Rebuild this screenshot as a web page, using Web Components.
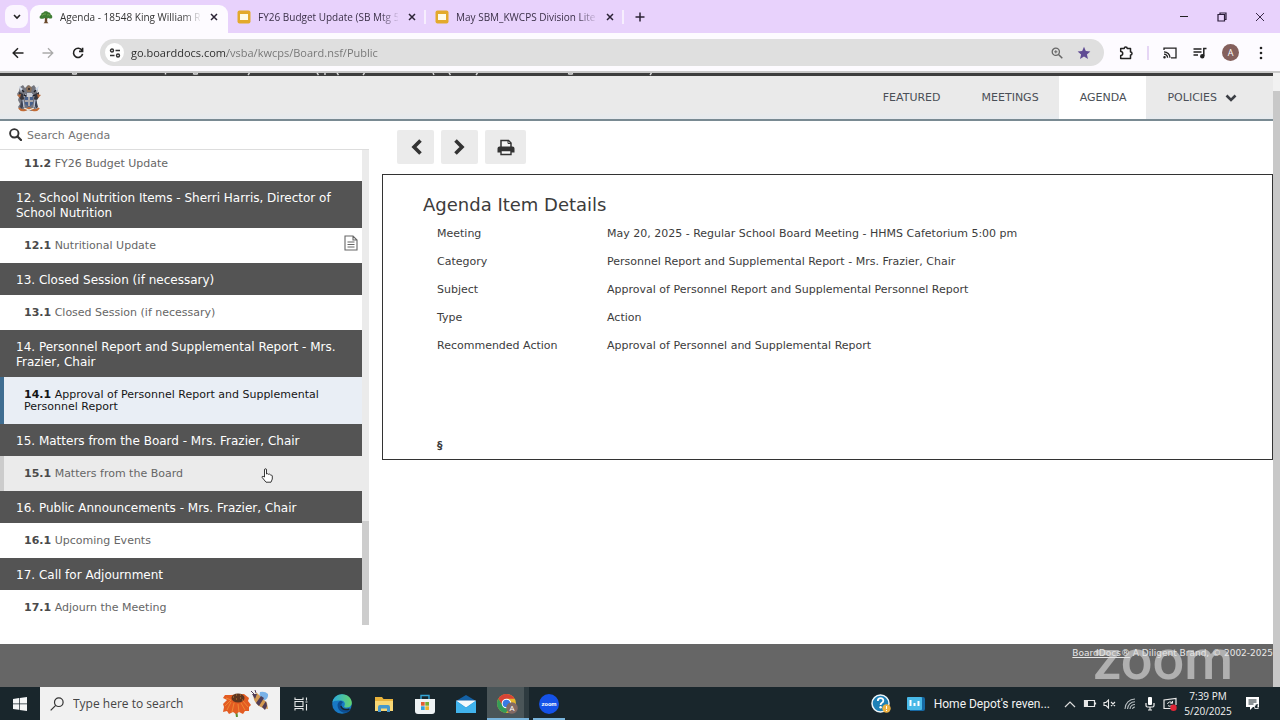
<!DOCTYPE html>
<html lang="en">
<head>
<meta charset="utf-8">
<title>Agenda - King William</title>
<style>
  html, body { margin: 0; height: 100%; }
  body { font-family: "DejaVu Sans", Verdana, sans-serif; background: #fff; overflow: hidden; }
</style>
</head>
<body>
<desktop-screen>
  <browser-tabs slot="chrome">
    <browser-tab active icon="tree">Agenda - 18548 King William R</browser-tab>
    <browser-tab icon="slides">FY26 Budget Update (SB Mtg 5</browser-tab>
    <browser-tab icon="slides">May SBM_KWCPS Division Liter</browser-tab>
  </browser-tabs>
  <browser-toolbar slot="chrome"></browser-toolbar>
  <board-header slot="page"></board-header>
  <agenda-sidebar slot="side">
    <agenda-item number="11.2">FY26 Budget Update</agenda-item>
    <agenda-category>12. School Nutrition Items - Sherri Harris, Director of School Nutrition</agenda-category>
    <agenda-item number="12.1" attachment>Nutritional Update</agenda-item>
    <agenda-category>13. Closed Session (if necessary)</agenda-category>
    <agenda-item number="13.1">Closed Session (if necessary)</agenda-item>
    <agenda-category>14. Personnel Report and Supplemental Report - Mrs. Frazier, Chair</agenda-category>
    <agenda-item number="14.1" selected>Approval of Personnel Report and Supplemental Personnel Report</agenda-item>
    <agenda-category>15. Matters from the Board - Mrs. Frazier, Chair</agenda-category>
    <agenda-item number="15.1" hovered>Matters from the Board</agenda-item>
    <agenda-category>16. Public Announcements - Mrs. Frazier, Chair</agenda-category>
    <agenda-item number="16.1">Upcoming Events</agenda-item>
    <agenda-category>17. Call for Adjournment</agenda-category>
    <agenda-item number="17.1">Adjourn the Meeting</agenda-item>
  </agenda-sidebar>
  <item-view slot="main">
    <detail-row label="Meeting">May 20, 2025 - Regular School Board Meeting - HHMS Cafetorium 5:00 pm</detail-row>
    <detail-row label="Category">Personnel Report and Supplemental Report - Mrs. Frazier, Chair</detail-row>
    <detail-row label="Subject">Approval of Personnel Report and Supplemental Personnel Report</detail-row>
    <detail-row label="Type">Action</detail-row>
    <detail-row label="Recommended Action">Approval of Personnel and Supplemental Report</detail-row>
  </item-view>
  <board-footer slot="footer"></board-footer>
  <task-bar slot="taskbar"></task-bar>
</desktop-screen>

<script>
const icons = {
  tree: '<svg viewBox="0 0 14 14" width="14" height="14"><path d="M6 7h2l.3 5 1.2 1.2h-5L5.700 12z" fill="#6b4a2c"/><path d="M.8 8.200C.2 6.600 1 5.400 2.200 5 2 3.200 3.400 2.500 4.400 2.500 5 .9 8.500.6 9.300 2.300c1.500-.1 2.500 1.100 2.300 2.300 1.400.3 2 1.800 1.500 3.300-1 .9-2.600.8-3.600.1-1 .8-2.500.6-3.200-.2-1.200 1-3.500 1.300-5.500.4z" fill="#3f7d34"/><path d="M3 5.500q2-2 4-1.500M8 5q2-1 3 .5" stroke="#6fa24c" fill="none"/></svg>',
  slides: '<svg viewBox="0 0 14 14" width="14" height="14"><rect x=".5" y=".5" width="13" height="13" rx="2" fill="#e3a92c"/><rect x="3" y="4" width="8" height="6" fill="#fffbe8"/></svg>',
  close: '<svg viewBox="0 0 8 8" width="8" height="8"><path d="M1 1l6 6M7 1L1 7" stroke="#2b2335" stroke-width="1.500"/></svg>'
};

function define(name, markup, setup) {
  const template = document.createElement('template');
  template.innerHTML = markup;
  customElements.define(name, class extends HTMLElement {
    constructor() {
      super();
      this.attachShadow({ mode: 'open' }).append(template.content.cloneNode(true));
    }
    connectedCallback() { if (setup) setup(this, this.shadowRoot); }
  });
}

define('desktop-screen', `
<style>
  :host { display: flex; flex-direction: column; min-height: 100vh; }
  .page { flex: 1; display: grid; grid-template-columns: minmax(0, 1fr) 7px; min-height: 0; }
  .site { display: flex; flex-direction: column; }
  .content { flex: 1; display: grid; grid-template-columns: 369px minmax(0, 1fr); min-height: 0; }
  .scroll { background: #f1f1f1; padding-top: 18px; display: flex; }
  .thumb { flex: 1; background: #c8c8c8; }
</style>
<slot name="chrome"></slot>
<div class="page">
  <div class="site">
    <slot name="page"></slot>
    <div class="content"><slot name="side"></slot><slot name="main"></slot></div>
    <slot name="footer"></slot>
  </div>
  <div class="scroll"><div class="thumb"></div></div>
</div>
<slot name="taskbar"></slot>`);

define('browser-tabs', `
<style>
  :host { display: flex; height: 33px; background: #e8d2fc; align-items: center; }
  button { border: 0; padding: 0; background: none; display: grid; place-items: center; }
  .list { width: 23px; height: 23px; margin: 0 2px 0 5px; background: #fbf6ff; border-radius: 8px; }
  .tabs { display: flex; align-self: stretch; }
  .new { width: 32px; height: 32px; }
  .win { margin-left: auto; display: flex; padding-right: 1px; }
  .win button { width: 38px; height: 32px; }
</style>
<button class="list" aria-label="Search tabs"><svg viewBox="0 0 8 6" width="8" height="6"><path d="M1 1l3 3 3-3" fill="none" stroke="#222" stroke-width="1.600"/></svg></button>
<div class="tabs"><slot></slot></div>
<button class="new" aria-label="New tab"><svg viewBox="0 0 10 10" width="10" height="10"><path d="M5 .5v9M.5 5h9" stroke="#2b2335" stroke-width="1.500"/></svg></button>
<div class="win">
  <button aria-label="Minimize"><svg viewBox="0 0 10 10" width="10" height="10"><path d="M1 4.500h8" stroke="#222"/></svg></button>
  <button aria-label="Restore"><svg viewBox="0 0 10 10" width="10" height="10"><path d="M1 2.500h6.500V9H1zM3 2V1h6v6.500H8" fill="none" stroke="#2a1d38" stroke-width="1.200"/></svg></button>
  <button aria-label="Close"><svg viewBox="0 0 10 10" width="10" height="10"><path d="M1 1l8 8M9 1L1 9" stroke="#3a2b48"/></svg></button>
</div>`);

define('browser-tab', `
<style>
  :host { display: flex; box-sizing: border-box; width: 198px; align-items: center; gap: 7px; padding-left: 9px;
          font: 10px/16px "Open Sans", "Segoe UI", sans-serif; color: #3a3047; }
  :host([active]) { background: #fdfbff; border-radius: 9px 9px 0 0; margin-top: 5px; padding-bottom: 5px; color: #333; }
  :host(:not([active])) { border-right: 2px solid #f6eefd; height: 14px; margin: 10px 0 9px; }
  .icon { display: flex; }
  .title { width: 140px; overflow: hidden; white-space: nowrap; mask-image: linear-gradient(90deg, #000 122px, transparent 142px); }
  button { border: 0; padding: 0; margin-left: -1px; width: 16px; height: 16px; background: none; display: grid; place-items: center; }
</style>
<span class="icon"></span><span class="title"><slot></slot></span>
<button aria-label="Close tab">${icons.close}</button>`,
(host, root) => { root.querySelector('.icon').innerHTML = icons[host.getAttribute('icon')]; });

define('browser-toolbar', `
<style>
  :host { display: flex; box-sizing: border-box; height: 40px; padding: 1px 4px 0 3px; align-items: center; background: #fdfbff; border-bottom: 2px solid #c9c9c9; }
  button { border: 0; padding: 0; background: none; width: 30px; height: 30px; display: grid; place-items: center; flex: none; }
  .omni { flex: 1; height: 27px; border-radius: 14px; background: #dfdfdf; display: flex; align-items: center; margin: 0 7px; padding: 0 7px 0 5px; }
  .omni button { width: 27px; height: 27px; }
  .omni .info { width: 19px; height: 19px; border-radius: 50%; background: #fff; }
  input { flex: 1; min-width: 0; border: 0; padding: 0 0 0 7px; outline: 0; height: 20px; font: 11px/20px "Open Sans", "Segoe UI", sans-serif;
    background: linear-gradient(90deg, #2a2a2a 103px, #737373 103px); background-clip: text; -webkit-background-clip: text; -webkit-text-fill-color: transparent; color: #555; }
  .bar { width: 2px; height: 14px; background: #e6d6f5; margin: 0 6px; }
  .avatar { width: 17px; height: 17px; border-radius: 50%; background: #84605c; color: #fff; font: 9px/17px "Open Sans", sans-serif; margin: 0 7px; }
</style>
<button aria-label="Back"><svg viewBox="0 0 12 12" width="12" height="12"><path d="M11.500 6H1.500M6 1.200L1.200 6 6 10.800" fill="none" stroke="#222" stroke-width="1.500"/></svg></button>
<button aria-label="Forward"><svg viewBox="0 0 12 12" width="12" height="12"><path d="M.5 6h10M6 1.200L10.800 6 6 10.800" fill="none" stroke="#aaa" stroke-width="1.300"/></svg></button>
<button aria-label="Reload"><svg viewBox="0 0 12 12" width="12" height="12"><path d="M10 3.400A4.600 4.600 0 1 0 10.600 6.800M10.600.8v3.600H7" fill="none" stroke="#222" stroke-width="1.600"/></svg></button>
<div class="omni">
  <button class="info" aria-label="Site information"><svg viewBox="0 0 12 10" width="12" height="10" fill="none" stroke="#333" stroke-width="1.400"><circle cx="3" cy="2.500" r="1.500"/><path d="M6.500 2.500H11M1 7.500h4.500"/><circle cx="9" cy="7.500" r="1.500"/></svg></button>
  <input type="text" aria-label="Address" value="go.boarddocs.com/vsba/kwcps/Board.nsf/Public">
  <button aria-label="Zoom"><svg viewBox="0 0 12 12" width="12" height="12" fill="none" stroke="#666"><circle cx="4.800" cy="4.800" r="3.600" stroke-width="1.300"/><path d="M7.500 7.500l3.800 3.800" stroke-width="1.500"/><path d="M4.800 3.200v3.200M3.200 4.800h3.200"/></svg></button>
  <button aria-label="Bookmark"><svg viewBox="0 0 14 14" width="14" height="14"><path d="M7 .8l1.800 4.300 4.600.4-3.500 3 1.100 4.500L7 10.600 3 13l1.100-4.500-3.500-3 4.600-.4z" fill="#604c94"/></svg></button>
</div>
<button aria-label="Extensions"><svg viewBox="0 0 14 14" width="14" height="14"><path d="M1.700 2.500H5.200a1.500 1.500 0 0 1 3 0h3.300V6a1.500 1.500 0 0 1 0 3v3.500H1.700V9.500a2 2 0 0 0 0-4z" fill="none" stroke="#222" stroke-width="1.500" stroke-linejoin="round"/></svg></button>
<span class="bar"></span>
<button aria-label="Cast"><svg viewBox="0 0 14 12" width="14" height="12" fill="none" stroke="#222" stroke-width="1.300"><path d="M1 3V1.200h12v9.600H8"/><path d="M1 4.800a6 6 0 0 1 6 6M1 7.200a3.600 3.600 0 0 1 3.600 3.600"/><circle cx="1.500" cy="10.300" r=".6" fill="#222"/></svg></button>
<button aria-label="Media controls"><svg viewBox="0 0 14 12" width="14" height="12" fill="none" stroke="#222" stroke-width="1.500"><path d="M.5 2h8M.5 5h8M.5 8h4.500M10.800 9V1.500H13.500"/><circle cx="9.300" cy="9.300" r="1.500" fill="#222"/></svg></button>
<button class="avatar" aria-label="Profile">A</button>
<button aria-label="Menu"><svg viewBox="0 0 4 14" width="4" height="14" fill="#222"><circle cx="2" cy="2" r="1.300"/><circle cx="2" cy="7" r="1.300"/><circle cx="2" cy="12" r="1.300"/></svg></button>`);

define('board-header', `
<style>
  :host { display: block; }
  .title { height: 3px; background: #3d3d3d; display: flex; }
  .title svg { display: block; }
  header { height: 43px; background: linear-gradient(#eaeaea 85%, #e6eaee); border-bottom: 2px solid #798a92; display: flex; align-items: center; padding: 0 16px; }
  nav { display: flex; margin-left: auto; align-self: stretch; }
  a { display: flex; align-items: center; gap: 8px; padding: 0 20px 0 21px; color: #4a4f57; text-decoration: none; font-size: 11px; }
  a.on { background: #fff; }
</style>
<div class="title"><svg viewBox="0 0 670 3" width="670" height="3" stroke="#ddd" stroke-width="1.400" fill="none"><path d="M72 .5q2.500 1 5 0M193 .5q2.500 1 5 0M165.500 0v1.500M248 2l1.500-2M317 0l1.500 2M325 0v2M337 0l1.500 2M363 2L364.500 0M433 0l1 2M449 0l1.500 2M476 2L477.500 0M568 .5q2.500 1 5 0M650 2L651.500 0"/></svg></div>
<header>
  <svg viewBox="0 0 26 28" width="26" height="28">
    <path d="M4 3l3-2 2 3 3-3 3 2 3-2 2 3 2 1-1 4 2 3-3 2 1 5-2 3 1 4-5 1-3-1-4 1-4-1-2-3 2-3-2-4 1-3-2-3 2-3z" fill="#73757e"/>
    <path d="M3 2l4 3-2 3zM23 2l-4 3 2 3z" fill="#cbd6e6"/>
    <path d="M10 4l3-3 3 3-1 4h-4z" fill="#89705a"/><path d="M11 9h5v4h-5z" fill="#c9ccd4"/>
    <path d="M3 8l4 2 1 5-3 1-2-3M23 8l-4 2-1 5 3 1 2-3" fill="#35353c"/>
    <path d="M1 11l4-1-1 4zM25 11l-4-1 1 4z" fill="#b56a3d"/>
    <path d="M9 13h8v7l-4 3-4-3z" fill="#47608c"/><path d="M12 13h2v9h-2zM9 16h8v2H9z" fill="#a9a6a8"/>
    <path d="M6 15l2 4-2 6-2-2M20 15l-2 4 2 6 2-2" fill="#3c4254"/>
    <path d="M7 16l1 7M19 16l-1 7M10 10l-2 3M16 10l2 3" stroke="#bcc7da" stroke-width="1.200"/>
    <path d="M3 24q2 3 6 2l4-2 4 2q4 1 6-2" fill="none" stroke="#c36c36" stroke-width="2"/>
    <path d="M8 24l5 2 5-2" fill="none" stroke="#eee6d8" stroke-width="1.300"/>
    <path d="M6 6l2 2M18 8l2-2M12 5h2M8 11l2 1M17 12l2-1" stroke="#20222a" stroke-width="1.500"/>
  </svg>
  <nav>
    <a href="#featured">FEATURED</a><a href="#meetings">MEETINGS</a><a class="on" href="#agenda">AGENDA</a>
    <a href="#policies">POLICIES<svg viewBox="0 0 12 8" width="12" height="8"><path d="M1.500 1.500L6 6l4.500-4.500" fill="none" stroke="#3c3f45" stroke-width="2.600"/></svg></a>
  </nav>
</header>`);

define('agenda-sidebar', `
<style>
  :host { display: flex; flex-direction: column; min-height: 0; padding-bottom: 19px; }
  label { display: flex; align-items: center; gap: 5px; height: 27px; padding: 1px 0 0 9px; border-bottom: 1px solid #ddd; }
  label svg { margin-bottom: 2px; }
  input { flex: 1; border: 0; padding: 0; outline: 0; background: none; font: 11px/16px "DejaVu Sans", sans-serif; }
  input::placeholder { color: #757575; opacity: 1; }
  .scroller { flex: 1; display: grid; grid-template-columns: minmax(0, 1fr) 7px; min-height: 0; }
  .list { display: flex; flex-direction: column; justify-content: flex-end; height: 0; min-height: 100%; overflow: hidden; }
  .track { background: #ebebeb; display: flex; flex-direction: column; justify-content: flex-end; }
  .thumb { height: 22%; background: #cdcdcd; }
</style>
<label><svg viewBox="0 0 13 13" width="13" height="13"><circle cx="5.300" cy="5.300" r="4.200" fill="none" stroke="#333" stroke-width="1.900"/><path d="M8.500 8.500l3.500 3.500" stroke="#333" stroke-width="2.300" stroke-linecap="round"/></svg>
<input type="text" aria-label="Search Agenda" placeholder="Search Agenda"></label>
<div class="scroller"><div class="list"><slot></slot></div><div class="track"><div class="thumb"></div></div></div>`);

define('agenda-category', `
<style>
  :host { display: block; flex: none; background: #545454; color: #fff; padding: 10px 16px 7px; font-size: 12px; line-height: 15px; }
</style><slot></slot>`);

define('agenda-item', `
<style>
  :host { display: block; flex: none; position: relative; font-size: 11px; line-height: 12px; border-left: 4px solid transparent; }
  :host([selected]) { background: #e9eef5; border-left-color: #3f6d91; }
  :host([hovered]) { background: #ebebeb; border-left-color: #ccc; }
  a { display: block; padding: 12px 24px 11px 20px; color: #666; text-decoration: none; }
  b { color: #4a4a4a; }
  :host([selected]) a, :host([selected]) b { color: #151515; }
  .doc { position: absolute; right: 4px; top: 7px; display: none; }
  :host([attachment]) .doc { display: block; }
  .hand { position: absolute; right: 89px; top: 12px; display: none; }
  :host([hovered]) .hand { display: block; }
</style>
<a href="#item"><b></b> <slot></slot></a>
<svg class="doc" viewBox="0 0 14 16" width="14" height="16"><path d="M1 1h8l4 4v10H1zM9 1v4h4M3.500 7h7M3.500 9.500h7M3.500 12h7" fill="none" stroke="#666" stroke-width="1.100"/></svg>
<svg class="hand" viewBox="0 0 12 15" width="12" height="15"><path d="M3.500 9V2q0-1.300 1-1.300t1 1.300v4l1-.3 1 .6 1-.2 1 .8 1 .1.8 1v3l-1.300 3.200H5L1.200 9.500q-.4-1.500 1-1.100z" fill="#fff" stroke="#222" stroke-width=".9"/></svg>`,
(host, root) => { root.querySelector('b').textContent = host.getAttribute('number'); });

define('item-view', `
<style>
  :host { display: block; padding: 9px 0 0 13px; color: #3c3c3c; }
  .tools { display: flex; gap: 7px; padding-left: 15px; margin-bottom: 10px; }
  button { border: 0; padding: 0; width: 37px; height: 34px; border-radius: 2px; background: #ebebeb; display: grid; place-items: center; }
  .print { width: 41px; }
  section { border: 1px solid #333; padding: 19px 40px 5px; }
  h1 { margin: 0 0 4px; font-size: 18px; line-height: 22px; font-weight: 400; }
  dl { margin: 0 0 78px; padding-left: 14px; }
  .end { margin: 0 0 0 14px; font-size: 11px; line-height: 16px; font-weight: 700; }
</style>
<div class="tools">
  <button aria-label="Previous item"><svg viewBox="0 0 14 18" width="14" height="18"><path d="M11.500 2.500L5 9l6.500 6.500" fill="none" stroke="#333" stroke-width="3.600"/></svg></button>
  <button aria-label="Next item"><svg viewBox="0 0 14 18" width="14" height="18"><path d="M2.500 2.500L9 9l-6.500 6.500" fill="none" stroke="#333" stroke-width="3.600"/></svg></button>
  <button class="print" aria-label="Print"><svg viewBox="0 0 18 17" width="18" height="17"><path d="M4 8V1.500h7.500L14 4v4" fill="#f4f4f4" stroke="#333" stroke-width="1.500"/><path d="M11 1.500V4.500h3" fill="none" stroke="#333"/><path d="M.5 13.500V9.500q0-2 2-2h13q2 0 2 2v4H14v-2H4v2z" fill="#333"/><path d="M4 11.500h10v4H4z" fill="#f8f8f8" stroke="#333" stroke-width="1.400"/></svg></button>
</div>
<section><h1>Agenda Item Details</h1><dl><slot></slot></dl><p class="end">§</p></section>`);

define('detail-row', `
<style>
  :host { display: grid; grid-template-columns: 170px minmax(0, 1fr); font-size: 11px; line-height: 16px; padding: 6px 0; }
  dt, dd { margin: 0; }
</style><dt></dt><dd><slot></slot></dd>`,
(host, root) => { root.querySelector('dt').textContent = host.getAttribute('label'); });

define('board-footer', `
<style>
  :host { display: block; height: 43px; background: #666; color: #e8e8e8; position: relative; font-size: 9px; line-height: 18px; text-align: right; }
  a { color: inherit; }
  .mark { position: absolute; right: 40px; bottom: 12px; font: 500 56px/30px Roboto, sans-serif; color: rgba(225, 225, 225, .6); }
</style>
<a href="#boarddocs">BoardDocs®</a> A Diligent Brand, © 2002-2025
<span class="mark">zoom</span>`);

define('task-bar', `
<style>
  :host { display: flex; height: 33px; background: #19262c; color: #f2f2f2; font: 12px/16px "Open Sans", "Segoe UI", sans-serif; }
  button { border: 0; padding: 0; background: none; color: inherit; font: inherit; display: grid; place-items: center; }
  .start { width: 40px; }
  label { display: flex; align-items: center; width: 240px; background: #f1f1f1; box-sizing: border-box; padding: 0 8px 0 10px; gap: 9px; }
  input { flex: 1; min-width: 0; border: 0; padding: 0; outline: 0; background: none; font: inherit; }
  input::placeholder { color: #454545; opacity: 1; }
  .apps { display: flex; width: 290px; }
  .apps button { flex: 1; }
  .apps .chrome { background: linear-gradient(90deg, #4a5558 37px, #2e3b40 37px); border-bottom: 2px solid #79b4dc; padding-top: 2px; }
  .apps .meet { background: linear-gradient(#79b4dc, #79b4dc) center bottom / 32px 2px no-repeat; }
  .tray { display: flex; align-items: center; margin-left: auto; padding-right: 15px; }
  .tray button { width: 20px; height: 33px; }
  .tray .help { width: 24px; margin-right: 14px; }
  .tray .news { display: flex; align-items: center; gap: 9px; width: auto; margin-right: 10px; font-family: Roboto, sans-serif; }
  .tray .clock { display: block; width: 60px; font-size: 10px; line-height: 15px; text-align: center; margin: 0 3px 0 -2px; }
  .tray .note { width: 24px; }
</style>
<button class="start" aria-label="Start"><svg viewBox="0 0 14 14" width="14" height="14" fill="#f4f6f7"><path d="M0 2l6-.9v5.500H0zM6.700 1L14 0v6.600H6.700zM0 7.300h6v5.500L0 12zM6.700 7.300H14V14l-7.300-1z"/></svg></button>
<label><svg viewBox="0 0 14 14" width="14" height="14" fill="none" stroke="#333" stroke-width="1.200"><circle cx="8.800" cy="5.200" r="4.300"/><path d="M5.700 8.300L.7 13.300"/></svg>
  <input type="text" aria-label="Type here to search" placeholder="Type here to search">
  <svg viewBox="0 0 50 27" width="50" height="27"><path d="M14 20l1 7" stroke="#5c8c2e" stroke-width="2"/><path d="M9 5L3 5 1 8l4 2-4 4 1 3-1 5 4-1 2 3 4-2 3 2 3-2 4 2 2-3 4 0 0-4 2-2-3-4 1-3-5-4z" fill="#e35c22"/><path d="M4 8l5 2-6 6M9 12l-4 8M12 13l-2 9M16 14l1 8M19 13l4 7M21 11l5 6" fill="none" stroke="#f08c35" stroke-width=".9"/><ellipse cx="16" cy="8" rx="6.500" ry="4.500" fill="#5d3520"/><path d="M11 7h1M14 5h1M18 5h1M14 9h1M18 8h1M20 10h1" stroke="#c88130" stroke-width="1.200"/>
    <g transform="translate(29 1)"><path d="M8 7L9 1q5-1 8 2 1 5-5 7z" fill="#79b2e8"/><path d="M2 4l4-2 10 10 1 6-5-1Q3 14 2 4z" fill="#d39a52"/><path d="M1 3l5 0-2 5zM5 12l5-7 3 2-5 8zM11 16l4-6 1 5-2 4z" fill="#4f3d57"/><path d="M3 3L0 0M5 2L4-1" stroke="#4f3d57"/></g></svg></label>
<div class="apps">
  <button aria-label="Task view"><svg viewBox="0 0 14 14" width="14" height="14" fill="none" stroke="#e4e7e8" stroke-width="1.100"><path d="M1 .5v2h8v-2M1 13.500v-2h8v2M1 4.500h8v5H1zM12.500.5v3M12.500 7v6.500M11.500 5h2"/></svg></button>
  <button aria-label="Edge"><svg viewBox="0 0 20 20" width="20" height="20"><defs><linearGradient id="e1"><stop stop-color="#2aa9e0"/><stop offset="1" stop-color="#65d36c"/></linearGradient></defs><circle cx="10" cy="10" r="9.800" fill="#1878c4"/><path d="M.3 9C1 3 5.500.2 10 .2c6 0 9.800 4.200 9.800 8.600 0 3-2.300 4.700-4.800 4.700-2 0-3.300-.7-2.700-1.600 1.400-2 .2-5.400-3.300-5.400C5 6.500 1.200 6.500.3 9z" fill="url(#e1)"/><path d="M9 6.800c-2.600.8-4 3-3.300 6 .8 3.700 4.500 6.500 8.300 6 2-.4 3.800-1.600 5-3.600-3 1.500-8.500 1-9.500-3-.4-1.800.3-3.300 1.500-4z" fill="#0d4d91"/><path d="M8.900 12c.8 2.800 4 4.300 8.600 3" fill="none" stroke="#19262c" stroke-width="1.400"/></svg></button>
  <button aria-label="File Explorer"><svg viewBox="0 0 20 18" width="20" height="18"><path d="M1 2h7l1.500 2H19v12H1z" fill="#e9b33c"/><path d="M1 6h18v10H1z" fill="#f8d775"/><path d="M4 17v-5q0-2 2-2h8q2 0 2 2v5h-3v-3.500H7V17z" fill="#4698cc"/></svg></button>
  <button aria-label="Store"><svg viewBox="0 0 20 20" width="20" height="20"><path d="M6 5V1.500h8V5" fill="none" stroke="#35a5d5" stroke-width="1.400"/><path d="M0 5h20v12q0 3-3 3H3q-3 0-3-3z" fill="#eef2f4"/><path d="M6 8h3.700v3.700H6z" fill="#e35b31"/><path d="M10.300 8H14v3.700h-3.700z" fill="#77ae31"/><path d="M6 12.300h3.700V16H6z" fill="#31a0db"/><path d="M10.300 12.300H14V16h-3.700z" fill="#edb42c"/></svg></button>
  <button aria-label="Mail"><svg viewBox="0 0 20 20" width="20" height="20"><path d="M0 7l10-6 10 6v12H0z" fill="#1461a5"/><path d="M0 7h20v12H0z" fill="#2799db"/><path d="M0 6.500h20L10 13.500z" fill="#f5f9fb"/><path d="M0 7l10 7L20 7v12H0z" fill="#41b3ec"/></svg></button>
  <button class="chrome" aria-label="Chrome"><svg viewBox="0 0 21 20" width="21" height="20"><circle cx="9.500" cy="9.500" r="9.500" fill="#e8b92c"/><path d="M1.300 4.800A9.500 9.500 0 0 1 17.700 4.800H9.500L5.500 12z" fill="#d94436"/><path d="M1.300 4.800A9.500 9.500 0 0 0 9 19l4-7H6z" fill="#349b57"/><circle cx="9.500" cy="9.500" r="4.800" fill="#fff"/><circle cx="9.500" cy="9.500" r="3.800" fill="#397ae4"/><circle cx="15" cy="14" r="5.800" fill="#846a64"/><text x="15" y="17" text-anchor="middle" font-family="Open Sans" font-size="8" fill="#fff">A</text></svg></button>
  <button class="meet" aria-label="Zoom"><svg viewBox="0 0 20 20" width="20" height="20"><circle cx="10" cy="10" r="10" fill="#1552e8"/><text x="10" y="12" text-anchor="middle" font-family="Roboto" font-weight="700" font-size="6" fill="#fff">zoom</text></svg></button>
</div>
<div class="tray">
  <button class="help" aria-label="Help"><svg viewBox="0 0 20 20" width="20" height="20"><circle cx="9.500" cy="9.500" r="8.500" fill="#1d81b7" stroke="#eef6fa" stroke-width="1.500"/><path d="M6.800 7q0-2.800 2.800-2.800T12.300 6.700q0 1.400-1.700 2.300-1 .6-1 2" fill="none" stroke="#fff" stroke-width="1.800"/><circle cx="9.600" cy="13.300" r="1.200" fill="#fff"/><circle cx="15.500" cy="14.500" r="4.200" fill="#edb244"/><path d="M15.500 12v3M15.500 16v1" stroke="#fff"/></svg></button>
  <button class="news"><svg viewBox="0 0 18 14" width="18" height="14"><path d="M3 0h13q2 0 2 2v10q0 2-2 2H3z" fill="#1669a4"/><rect width="15" height="13" rx="1" fill="#48b9e8"/><path d="M2.500 3h2v6h-2zM6.500 6h2v3h-2zM10.500 4h2v5h-2z" fill="#fff"/></svg>Home Depot's reven...</button>
  <button aria-label="Show hidden icons"><svg viewBox="0 0 12 8" width="12" height="8"><path d="M1 7l5-5 5 5" fill="none" stroke="#ddd" stroke-width="1.200"/></svg></button>
  <button aria-label="Battery"><svg viewBox="0 0 14 10" width="14" height="10"><path d="M1.500 1.500h10v6h-10zM12.500 3.500v2" fill="none" stroke="#e8e8e8" stroke-width="1.200"/><path d="M2 2h3v5H2z" fill="#e8e8e8"/></svg></button>
  <button aria-label="Volume muted"><svg viewBox="0 0 14 10" width="14" height="10" fill="none" stroke="#e8e8e8" stroke-width="1.100"><path d="M1 3.500h2L5.500 1v8L3 6.500H1zM8 3l4 4M12 3L8 7"/></svg></button>
  <button aria-label="Network"><svg viewBox="0 0 12 12" width="12" height="12" fill="none" stroke="#b8bfc2" stroke-width="1.100"><path d="M1 11A10 10 0 0 1 11 1M3.500 11A7.500 7.500 0 0 1 11 3.700M6 11a5 5 0 0 1 5-4.500M8.500 11A2.500 2.500 0 0 1 11 9"/></svg></button>
  <button aria-label="Microphone"><svg viewBox="0 0 10 14" width="10" height="14"><rect x="3" y="0" width="4" height="8" rx="1" fill="#fff"/><path d="M1 6v2.500q0 1.500 1.500 1.500h5Q9 10 9 8.500V6M5 10v3M3 13h4" fill="none" stroke="#eee" stroke-width="1.200"/></svg></button>
  <button aria-label="Updates"><svg viewBox="0 0 14 14" width="14" height="14"><path d="M8 11.500H1V3l12-1.500V8" fill="none" stroke="#e8e8e8" stroke-width="1.200"/><path d="M4.500 7a2.700 2.700 0 0 1 4.800-1M9.500 4v2.200H7.300M9 8a2.600 2.600 0 0 1-4 .5" fill="none" stroke="#e8e8e8"/><circle cx="10.500" cy="10.800" r="3.200" fill="#e02637"/></svg></button>
  <button class="clock">7:39 PM<br>5/20/2025</button>
  <button class="note" aria-label="Notifications"><svg viewBox="0 0 14 14" width="14" height="14"><path d="M0 0h13v10H7l-3 3v-3H0z" fill="#fff"/><path d="M2.500 3h8M2.500 5h8M2.500 7h5" stroke="#19262c"/><path d="M12.500 7q-1.300 2-.2 4.500h-3.500q-1-2.500 1-4" fill="#19262c" stroke="#fff" stroke-width=".8"/></svg></button>
</div>`);
</script>
</body>
</html>
